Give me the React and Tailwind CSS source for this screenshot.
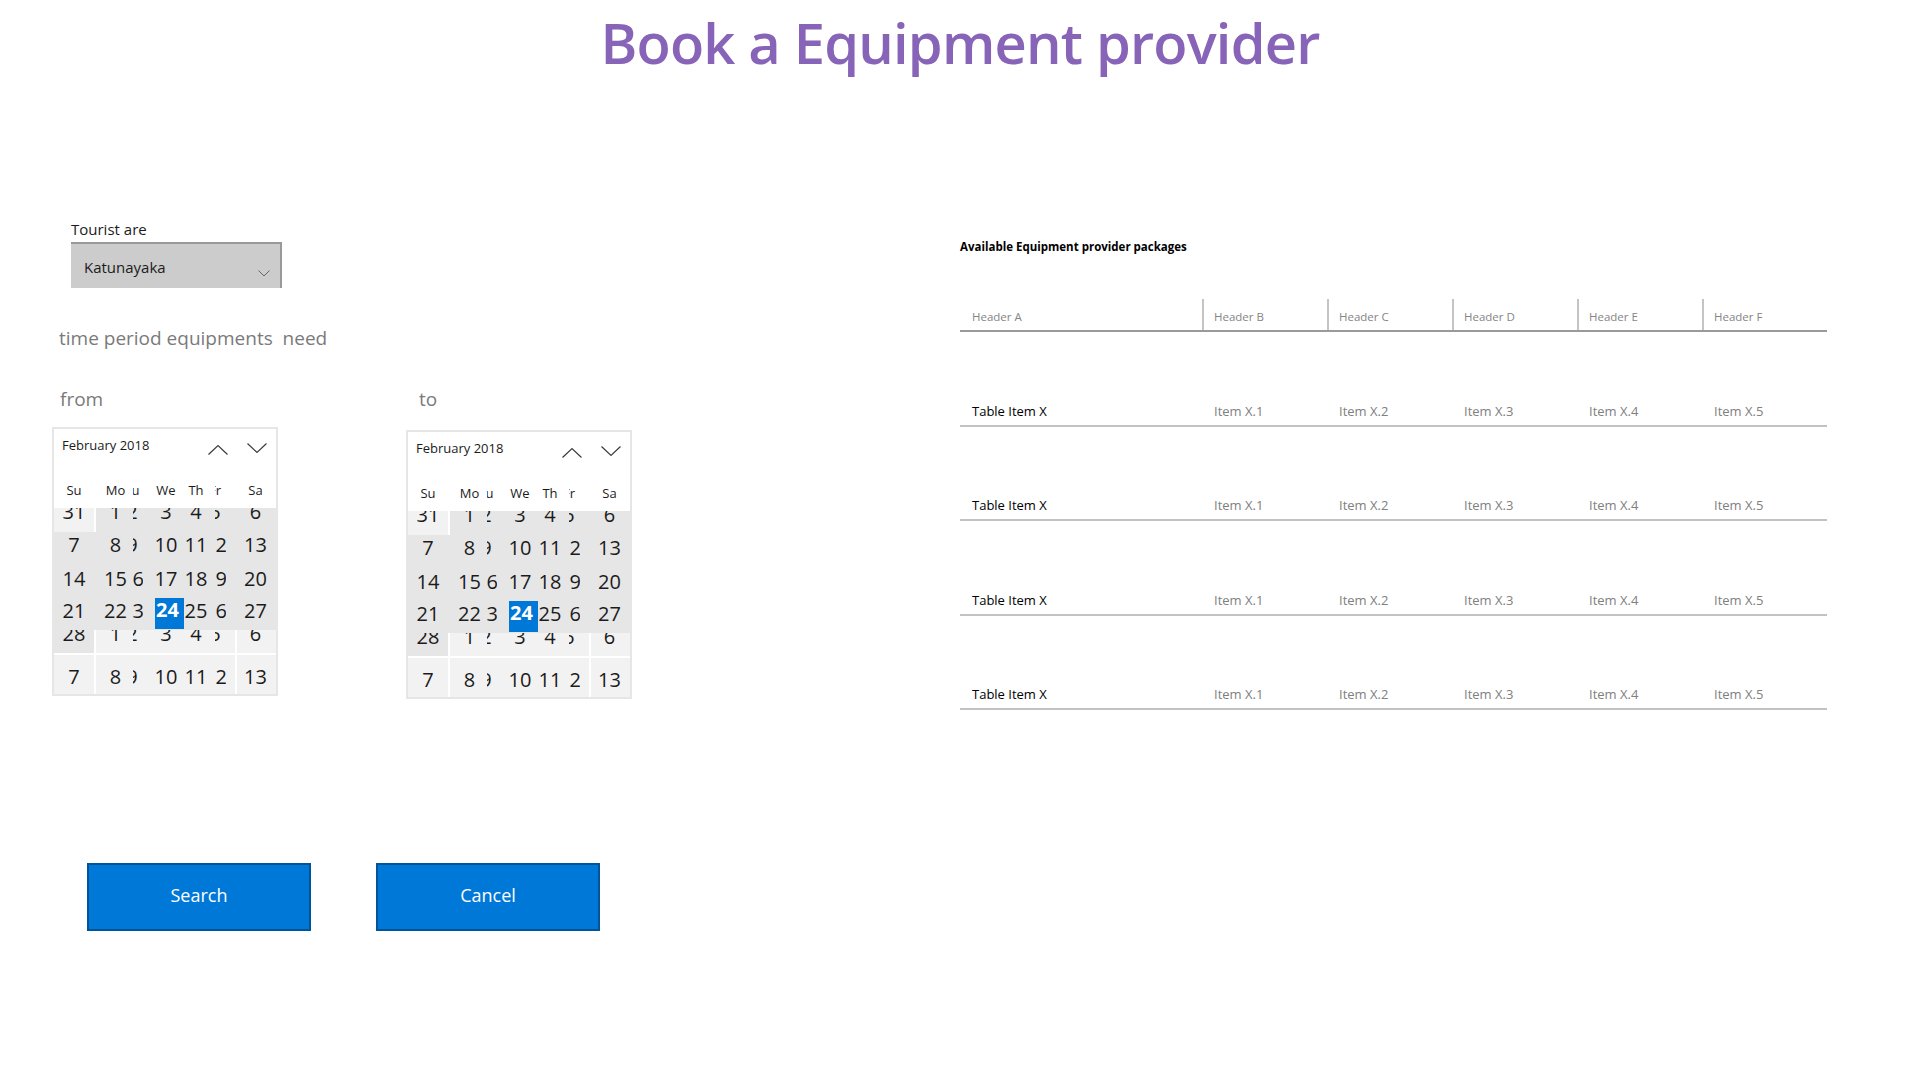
import React from 'react'

function Row({ className, off = '', v, suBg = '', sepL = false, sepR = false, sel = false, small = false }) {
  const t = small ? 'text-[13px] leading-[18px]' : 'text-[20px] leading-[20px]'
  return (
    <div className={`flex shrink-0 overflow-hidden text-[#1b1b1b] ${t} ${className}`}>
      <div className={`w-[40px] shrink-0 text-center ${suBg}`}>
        <div className={off}>{v[0]}</div>
      </div>
      <div className={`w-[8px] shrink-0 ${sepL ? 'border-l-2 border-white' : ''}`} />
      <div className="w-[27px] shrink-0 text-center">
        <div className={off}>{v[1]}</div>
      </div>
      <div className="w-[4px] shrink-0" />
      <div className="w-[10px] shrink-0 overflow-hidden">
        <div className={`w-[22px] -ml-[12px] text-center ${off}`}>{v[2]}</div>
      </div>
      <div className="w-[9px] shrink-0" />
      <div className="w-[28px] shrink-0 text-center">
        {sel ? (
          <div className="mt-[2px] ml-[3px] w-[29px] h-[31px] bg-[#0078d7] text-white font-bold text-left pl-[1px] pt-[2px]">
            {v[3]}
          </div>
        ) : (
          <div className={off}>{v[3]}</div>
        )}
      </div>
      <div className="w-[32px] shrink-0 text-center">
        <div className={off}>{v[4]}</div>
      </div>
      <div className="w-[3px] shrink-0" />
      <div className="w-[11px] shrink-0 overflow-hidden">
        <div className={`w-[22px] -ml-[11px] text-center ${off}`}>{v[5]}</div>
      </div>
      <div className={`w-[11px] shrink-0 ${sepR ? 'border-r-2 border-white' : ''}`} />
      <div className="w-[37px] shrink-0 text-center">
        <div className={off}>{v[6]}</div>
      </div>
    </div>
  )
}

function Calendar() {
  return (
    <div className="w-[226px] h-[269px] border-2 border-[#e6e6e6] bg-white flex flex-col">
      {/* month + arrows + weekday names */}
      <div className="h-[79px] shrink-0 flex flex-col">
        <div className="h-[40px] flex items-start">
          <div className="mt-[7px] pl-[8px] text-[13px] leading-[18px] text-[#1b1b1b]">February 2018</div>
          <svg className="ml-auto mt-[16px]" width="20" height="10" viewBox="0 0 20 10" fill="none" stroke="#3a3a3a" strokeWidth="1.2">
            <polyline points="0.5,9.5 10,0.6 19.5,9.5" />
          </svg>
          <svg className="ml-[19px] mr-[9px] mt-[14px]" width="20" height="10" viewBox="0 0 20 10" fill="none" stroke="#3a3a3a" strokeWidth="1.2">
            <polyline points="0.5,0.5 10,9.4 19.5,0.5" />
          </svg>
        </div>
        <Row className="mt-[12px] h-[18px]" small v={['Su', 'Mo', 'Tu', 'We', 'Th', 'Fr', 'Sa']} />
      </div>

      <Row className="h-[24px] bg-[#e6e6e6]" off="-mt-[6px]" suBg="bg-[#f2f2f2]" sepL v={['31', '1', '2', '3', '4', '5', '6']} />
      <Row className="h-[32px] bg-[#e6e6e6]" off="mt-[3px]" v={['7', '8', '9', '10', '11', '12', '13']} />
      <Row className="h-[32px] bg-[#e6e6e6]" off="mt-[5px]" v={['14', '15', '16', '17', '18', '19', '20']} />
      <Row className="h-[34px] bg-[#e6e6e6]" off="mt-[5px]" sel v={['21', '22', '23', '24', '25', '26', '27']} />
      <Row className="h-[23px] bg-[#f2f2f2]" off="-mt-[6px]" suBg="bg-[#e6e6e6]" sepL sepR v={['28', '1', '2', '3', '4', '5', '6']} />
      <div className="h-[2px] shrink-0 bg-white" />
      <Row className="h-[39px] bg-[#f2f2f2]" off="mt-[12px]" sepL sepR v={['7', '8', '9', '10', '11', '12', '13']} />
    </div>
  )
}

const headers = ['Header A', 'Header B', 'Header C', 'Header D', 'Header E', 'Header F']

export default function App() {
  return (
    <div className="min-h-screen bg-white font-['Open_Sans',sans-serif]">
      <h1 className="pt-[7px] text-center text-[56px] leading-[70px] font-semibold tracking-[-0.8px] text-[#8764b8]">
        Book a Equipment provider
      </h1>

      <div className="grid grid-cols-2">
        {/* Left: search form */}
        <div className="pt-[142px]">
          <div className="pl-[71px] text-[15px] leading-[20px] text-[#1b1b1b]">Tourist are</div>
          <div className="ml-[71px] mt-[3px] w-[211px] h-[46px] bg-[#cccccc] border-t-2 border-r-2 border-[#999999] flex items-start">
            <span className="mt-[13px] ml-[13px] text-[15px] leading-[20px] text-[#1b1b1b]">Katunayaka</span>
            <svg className="ml-auto mt-[26px] mr-[10px]" width="12" height="7" viewBox="0 0 12 7" fill="none" stroke="#666" strokeWidth="1">
              <polyline points="0.5,0.5 6,6 11.5,0.5" />
            </svg>
          </div>

          <div className="mt-[36px] pl-[59px] text-[19px] leading-[28px] text-[#7a7a7a] whitespace-pre">
            time period equipments  need
          </div>

          <div className="mt-[33px] flex text-[19px] leading-[28px] text-[#7a7a7a]">
            <div className="w-[419px] pl-[60px]">from</div>
            <div>to</div>
          </div>

          <div className="mt-[14px] flex items-start">
            <div className="ml-[52px]">
              <Calendar />
            </div>
            <div className="ml-[128px] mt-[3px]">
              <Calendar />
            </div>
          </div>

          <div className="mt-[164px] flex">
            <button className="ml-[87px] w-[224px] h-[68px] pb-[3px] bg-[#0078d7] border-2 border-[#005499] text-white text-[18px]">
              Search
            </button>
            <button className="ml-[65px] w-[224px] h-[68px] pb-[3px] bg-[#0078d7] border-2 border-[#005499] text-white text-[18px]">
              Cancel
            </button>
          </div>
        </div>

        {/* Right: packages table */}
        <div className="pt-[162px] w-[867px]">
          <div className="text-[11.5px] leading-[16px] font-bold text-black">Available Equipment provider packages</div>

          <div className="mt-[44px]">
            <div className="flex h-[33px] border-b-2 border-[#9a9a9a] text-[11.5px] leading-[16px] text-[#858585]">
              {headers.map((h, i) => (
                <div
                  key={h}
                  className={i === 0 ? 'w-[242px] pl-[12px] pt-[10px]' : 'w-[125px] border-l-2 border-[#c4c4c4] pl-[10px] pt-[10px]'}
                >
                  {h}
                </div>
              ))}
            </div>

            {[0, 1, 2, 3].map((r) => (
              <div key={r} className="flex items-end h-[94.5px] pb-[6px] border-b-2 border-[#c2c2c2] text-[13px] leading-[16px]">
                <div className="w-[242px] pl-[12px] text-black">Table Item X</div>
                {[1, 2, 3, 4, 5].map((n) => (
                  <div key={n} className="w-[125px] pl-[12px] text-[#808080]">
                    Item X.{n}
                  </div>
                ))}
              </div>
            ))}
          </div>
        </div>
      </div>
    </div>
  )
}
